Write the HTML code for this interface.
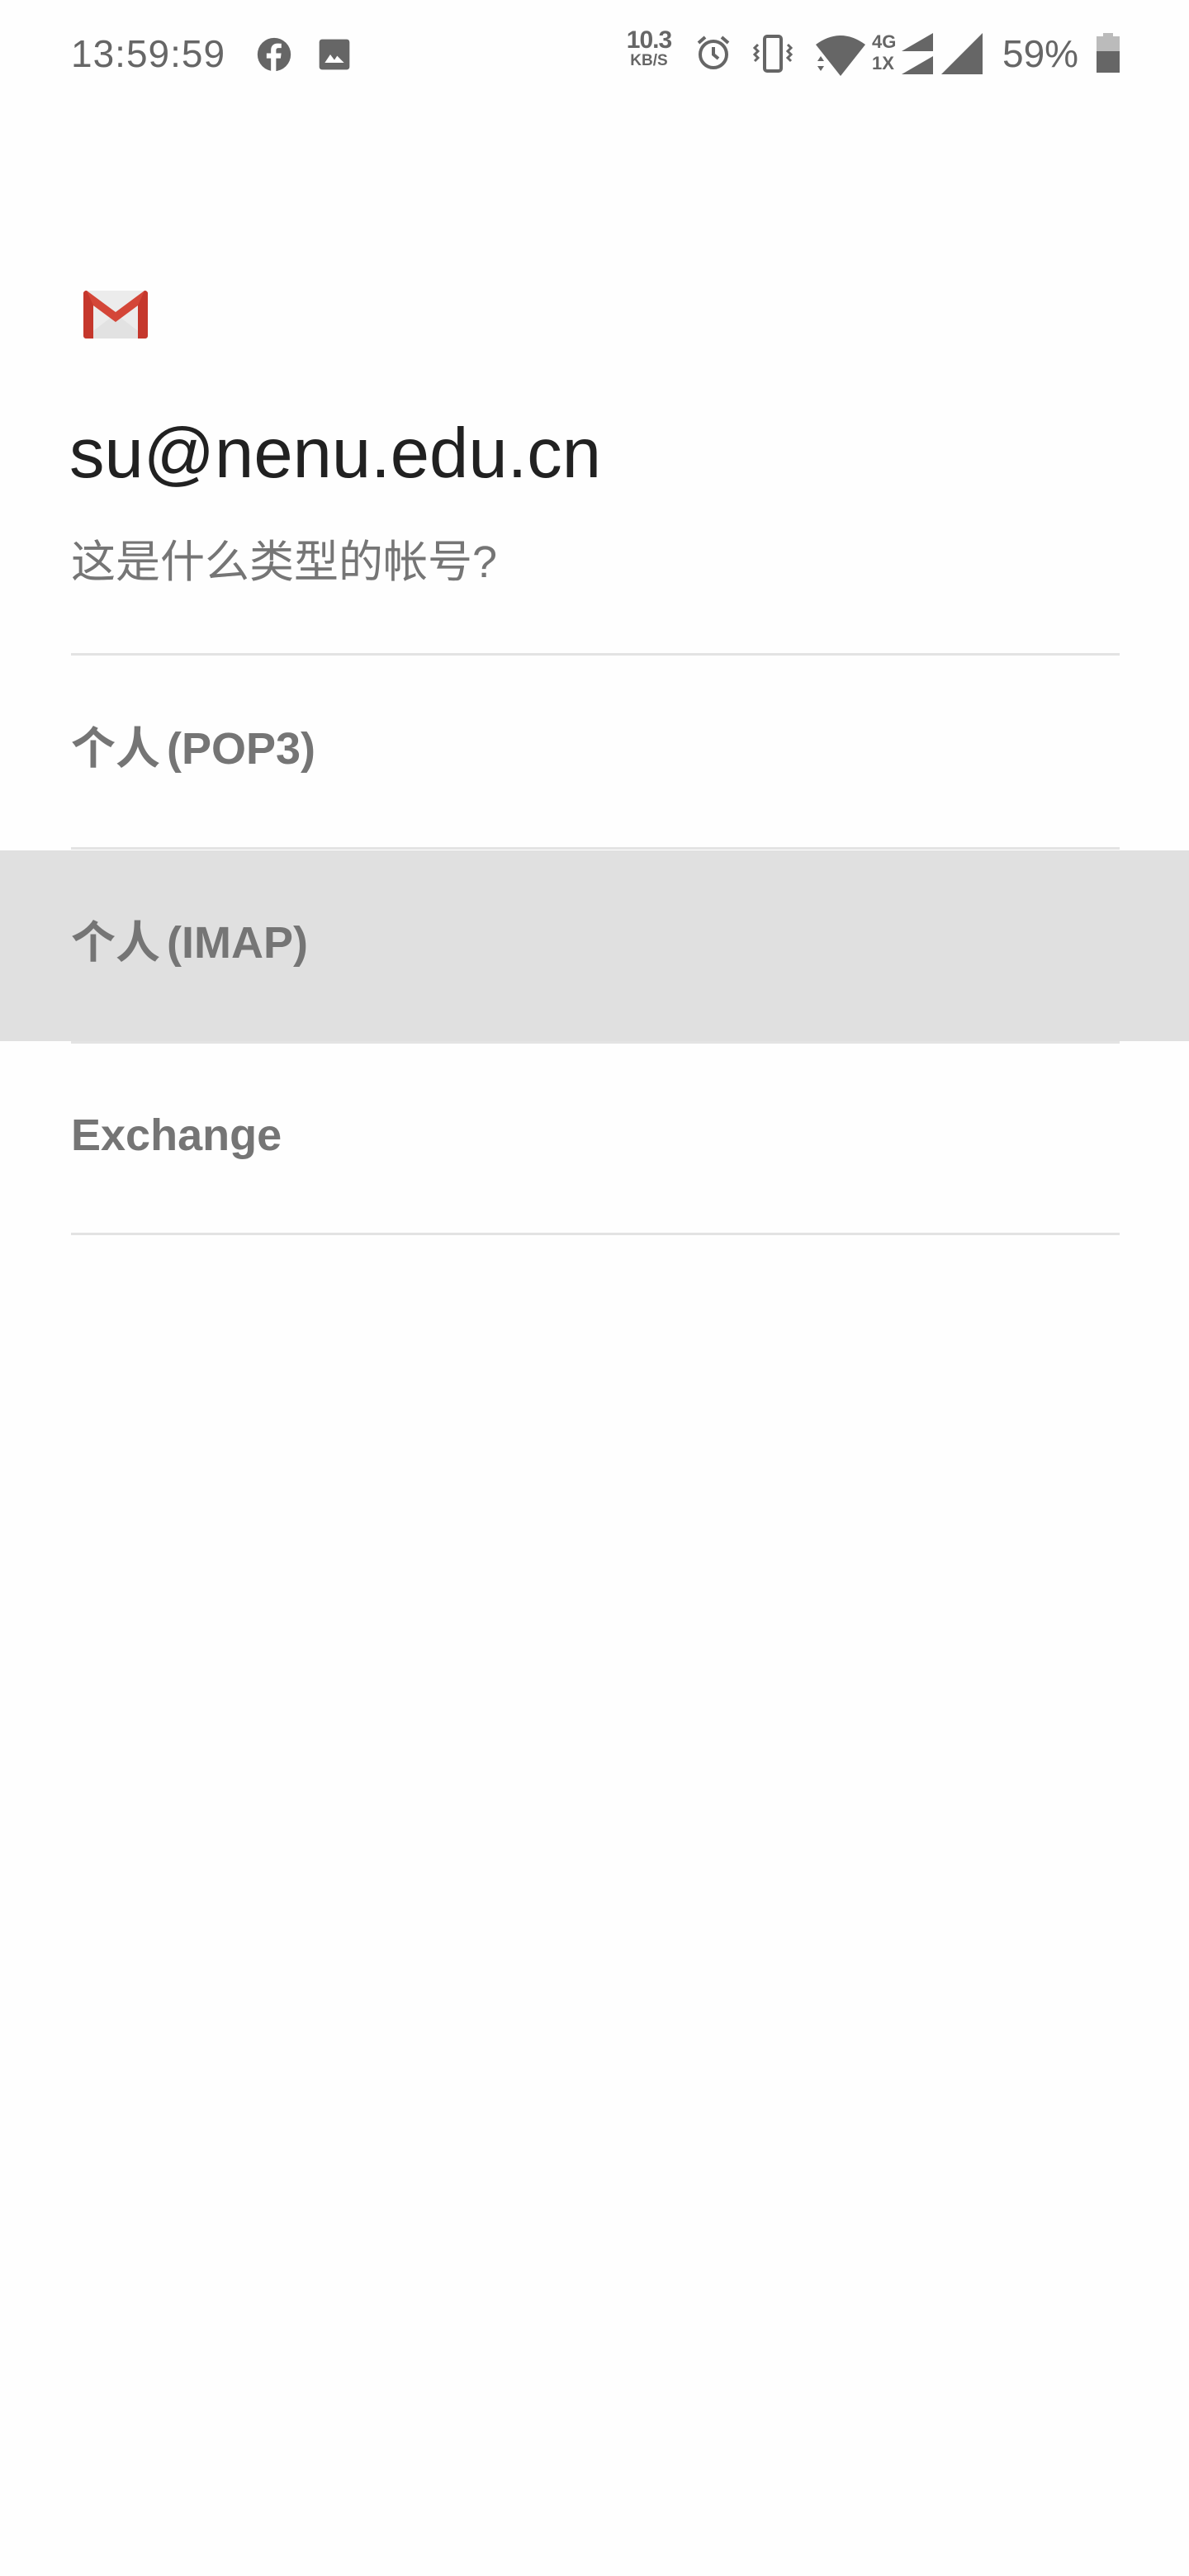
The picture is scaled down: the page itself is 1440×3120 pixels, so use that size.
<!DOCTYPE html>
<html><head><meta charset="utf-8">
<style>
html,body{margin:0;padding:0;}
body{width:1440px;height:3120px;background:#fefefe;position:relative;overflow:hidden;font-family:"Liberation Sans","Noto Sans CJK SC",sans-serif;}
.abs{position:absolute;}
.sb{color:#666;font-size:46px;}
.div{position:absolute;left:86px;width:1270px;height:3px;background:#e3e3e3;}
.item{position:absolute;left:86px;font-weight:bold;color:#757575;font-size:54px;line-height:60px;}
</style></head><body>
<!-- status bar -->
<div class="abs sb" style="left:86px;top:37px;line-height:56px;letter-spacing:1px">13:59:59</div>
<svg class="abs" style="left:310px;top:44px" width="44" height="44" viewBox="0 0 24 24"><circle cx="12" cy="12" r="11" fill="#666"/><path d="M13.3 24V14.5h3l.4-3.3h-3.4V9.3c0-1 .3-1.6 1.7-1.6h1.8V4.8c-.3 0-1.4-.1-2.6-.1-2.6 0-4.3 1.6-4.3 4.4v2.1H7v3.3h2.9V24z" fill="#fff"/></svg>
<svg class="abs" style="left:385px;top:46px" width="40" height="40" viewBox="0 0 24 24"><rect x="1" y="1" width="22" height="22" rx="2" fill="#666"/><path d="M5 18l4-6 3 4 2-3 5 5z" fill="#fff"/></svg>
<div class="abs" style="left:754px;top:34px;color:#666;font-weight:bold;font-size:30px;line-height:30px;text-align:center;width:64px;letter-spacing:-1px">10.3<div style="font-size:19px;line-height:20px;letter-spacing:0">KB/S</div></div>
<svg class="abs" style="left:840px;top:40px" width="48" height="48" viewBox="0 0 24 24"><circle cx="12" cy="13" r="8" fill="none" stroke="#666" stroke-width="2"/><path d="M12 8.5V13l3 2.5" fill="none" stroke="#666" stroke-width="2"/><path d="M3 6l4-3.5M21 6l-4-3.5" stroke="#666" stroke-width="2"/></svg>
<svg class="abs" style="left:910px;top:40px" width="52" height="50" viewBox="0 0 26 25"><rect x="8" y="2" width="10" height="21" rx="1.5" fill="none" stroke="#666" stroke-width="2"/><path d="M4 7l-2 2 2 2-2 2 2 2-2 2M22 7l2 2-2 2 2 2-2 2 2 2" fill="none" stroke="#666" stroke-width="1.5"/></svg>
<svg class="abs" style="left:984px;top:40px" width="68" height="52" viewBox="0 0 34 26"><path d="M2 7Q17-4 32 7L17 26Z" fill="#666"/><path d="M3 17l2-3 2 3zM3 20l2 3 2-3z" fill="#666"/></svg>
<div class="abs" style="left:1056px;top:38px;color:#666;font-weight:bold;font-size:22px;line-height:26px;">4G<br>1X</div>
<svg class="abs" style="left:1090px;top:40px" width="40" height="50" viewBox="0 0 20 25"><path d="M20 0V11H1z M20 14V25H1z" fill="#666"/></svg>
<svg class="abs" style="left:1140px;top:40px" width="50" height="50" viewBox="0 0 25 25"><path d="M25 0V25H0z" fill="#666"/></svg>
<div class="abs sb" style="left:1214px;top:37px;line-height:56px;">59%</div>
<svg class="abs" style="left:1328px;top:40px" width="28" height="48" viewBox="0 0 14 24"><rect x="4" y="0" width="6" height="3" fill="#bbb"/><rect x="0" y="2" width="14" height="9" fill="#bbb"/><rect x="0" y="11" width="14" height="13" fill="#666"/></svg>
<!-- gmail logo -->
<svg class="abs" style="left:101px;top:352px" width="78" height="58" viewBox="0 0 78 58"><rect x="0" y="0" width="78" height="58" rx="4" fill="#ececec"/><path d="M0 58L39 28 78 58z" fill="#e2e2e2"/><path d="M0 4Q0 0 4 0L39 26 74 0Q78 0 78 4V54Q78 58 74 58H66V18L39 38 12 18V58H4Q0 58 0 54z" fill="#d44638"/><path d="M12 18V58H4Q0 58 0 54V4Q0 0 4 0z" fill="#c5372c"/><path d="M66 18V58h8q4 0 4-4V4Q78 0 74 0z" fill="#c5372c"/></svg>
<div class="abs" style="left:84px;top:500px;font-size:85px;line-height:100px;color:#212121;">su@nenu.edu.cn</div>
<div class="abs" style="left:86px;top:646px;font-size:54px;line-height:70px;color:#757575;">这是什么类型的帐号?</div>
<div class="div" style="top:791px"></div>
<div class="item" style="top:877px">个人<span style="margin-left:8px">(POP3)</span></div>
<div class="div" style="top:1026px"></div>
<div class="abs" style="left:0;top:1030px;width:1440px;height:231px;background:#e0e0e0;"></div>
<div class="item" style="top:1112px">个人<span style="margin-left:8px">(IMAP)</span></div>
<div class="div" style="top:1261px"></div>
<div class="item" style="top:1345px;font-size:54px">Exchange</div>
<div class="div" style="top:1493px"></div>
</body></html>
